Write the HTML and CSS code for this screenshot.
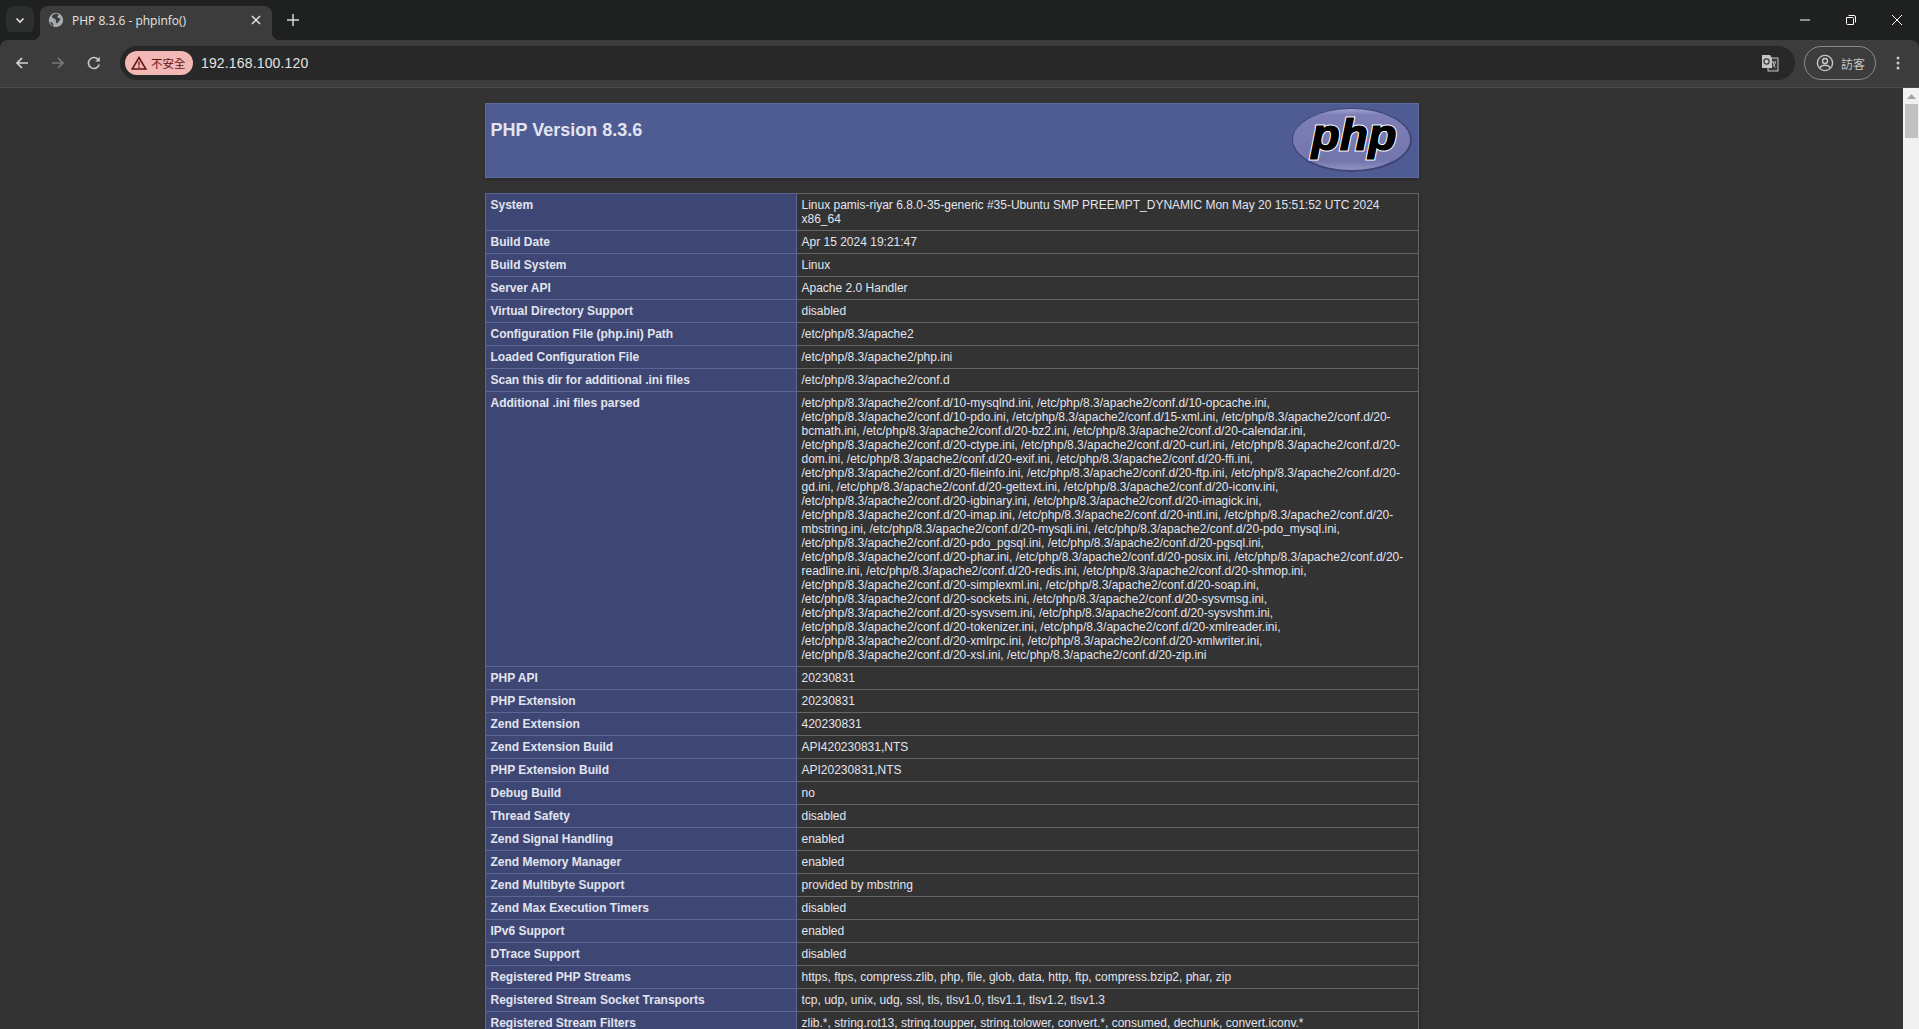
FILE: index.html
```html
<!DOCTYPE html>
<html lang="zh-Hant">
<head>
<meta charset="utf-8">
<title>PHP 8.3.6 - phpinfo()</title>
<link rel="stylesheet" href="styles.css">
</head>
<body>
<div class="browser">
  <header class="tabstrip">
    <button class="tabsearch" aria-label="tabs">
      <svg width="12" height="12" viewBox="0 0 12 12"><path d="M2.5 4.5 6 8l3.5-3.5" fill="none" stroke="#e3e3e3" stroke-width="1.6"/></svg>
    </button>
    <div class="tab">
      <svg class="favicon" width="16" height="16" viewBox="0 0 16 16"><circle cx="8" cy="8" r="7.2" fill="#a8abb0"/><path d="M8 1.5c-1 .8-3.5 1-4 2.5-.4 1.300 1.500 2.400 2.800 2.900.9.400 1.400 1.100 1 2-.3.800.2 2 1 2.300.8.300 1.500-1.500 2.200-2.300.6-.7 1.500-1 1.200-2.100-.2-.7-1.500-.6-2.200-1-.8-.5-.6-1.500 0-2.100.3-.3.800-.4 1-.7C10.500 2 9 1.400 8 1.500zM2 9.500c1 .7 2.500 1 3 2 .3.800.1 2 .5 2.600C3.800 13.500 2.500 11.500 2 9.500z" fill="#3c3c3c"/></svg>
      <span class="tab-title">PHP 8.3.6 - phpinfo()</span>
      <svg class="tab-close" width="10" height="10" viewBox="0 0 10 10"><path d="M1 1l8 8M9 1 1 9" stroke="#e3e3e3" stroke-width="1.500"/></svg>
    </div>
    <svg class="newtab" width="14" height="14" viewBox="0 0 14 14"><path d="M7 1v12M1 7h12" stroke="#d8d8d8" stroke-width="1.500"/></svg>
    <div class="winctl">
      <span class="winbtn"><svg width="12" height="12" viewBox="0 0 12 12"><path d="M1 6h10" stroke="#fff"/></svg></span>
      <span class="winbtn"><svg width="12" height="12" viewBox="0 0 12 12"><path d="M1.500 3.500h6a1 1 0 0 1 1 1v6h-6a1 1 0 0 1-1-1zM3.500 1.500h5.500a1.500 1.500 0 0 1 1.500 1.500v5.500" fill="none" stroke="#fff"/></svg></span>
      <span class="winbtn"><svg width="12" height="12" viewBox="0 0 12 12"><path d="M1 1l10 10M11 1 1 11" stroke="#fff"/></svg></span>
    </div>
  </header>
  <nav class="toolbar">
    <svg class="navicon" width="16" height="16" viewBox="0 0 16 16"><path d="M14 8H3M8 3 3 8l5 5" fill="none" stroke="#d4d4d4" stroke-width="1.700"/></svg>
    <svg class="navicon" width="16" height="16" viewBox="0 0 16 16"><path d="M2 8h11M8 3l5 5-5 5" fill="none" stroke="#797979" stroke-width="1.700"/></svg>
    <svg class="navicon" width="16" height="16" viewBox="0 0 16 16"><path d="M13.200 9.500A5.500 5.500 0 1 1 12 4.300" fill="none" stroke="#c8c8c8" stroke-width="1.600"/><path d="M13.800 1.800v4.600H9.200z" fill="#c8c8c8"/></svg>
    <div class="omnibox">
      <span class="badge">
        <svg width="16" height="14" viewBox="0 0 16 14"><path d="M8 1.500 14.800 13H1.200z" fill="none" stroke="#601410" stroke-width="1.500"/><path d="M8 5.500v4M8 10.300v1.400" stroke="#601410" stroke-width="1.300"/></svg>
        <span class="badge-text">不安全</span>
      </span>
      <span class="url">192.168.100.120</span>
      <svg class="translate" width="18" height="18" viewBox="0 0 18 18"><rect x="7" y="4" width="10" height="13" fill="#383838" stroke="#c4c4c4"/><path d="M1 1h8l2 3v10H1z" fill="#c4c4c4"/><circle cx="5.500" cy="7.500" r="2.600" fill="none" stroke="#3a3a3a" stroke-width="1.200"/><path d="M10.500 8h4.500M12 8l2 5.500M14.500 8c-.3 2-1.500 3.500-3 4.500" fill="none" stroke="#c4c4c4" stroke-width=".9"/></svg>
    </div>
    <div class="profile">
      <svg width="18" height="18" viewBox="0 0 18 18"><circle cx="9" cy="9" r="7.600" fill="none" stroke="#c8c8c8" stroke-width="1.400"/><circle cx="9" cy="7" r="2.500" fill="none" stroke="#c8c8c8" stroke-width="1.400"/><path d="M3.800 14c1-2 3-2.700 5.200-2.700s4.200.7 5.200 2.700" fill="none" stroke="#c8c8c8" stroke-width="1.400"/></svg>
      <span class="profile-text">訪客</span>
    </div>
    <svg class="kebab" width="4" height="14" viewBox="0 0 4 14"><circle cx="2" cy="2" r="1.500" fill="#c8c8c8"/><circle cx="2" cy="7" r="1.500" fill="#c8c8c8"/><circle cx="2" cy="12" r="1.500" fill="#c8c8c8"/></svg>
  </nav>
  <div class="viewport">
    <main class="page">
      <table class="head-table">
        <tr class="h">
          <td>
            <svg class="php-logo" width="120" height="64" viewBox="0 0 120 64" role="img" aria-label="PHP logo">
              <defs>
                <linearGradient id="ell" x1="0" y1="0" x2="0" y2="1"><stop offset="0" stop-color="#a0a2cc"/><stop offset=".1" stop-color="#7d7fb6"/><stop offset=".85" stop-color="#7376ad"/><stop offset="1" stop-color="#9092c2"/></linearGradient>
              </defs>
              <ellipse cx="60" cy="32" rx="60" ry="32" fill="#3f4677"/>
              <ellipse cx="59.500" cy="31.500" rx="58.500" ry="30.500" fill="url(#ell)"/>
              <text x="62" y="42" class="php-word-back" text-anchor="middle" textLength="85" lengthAdjust="spacingAndGlyphs">php</text>
              <text x="62" y="42" class="php-word" text-anchor="middle" textLength="85" lengthAdjust="spacingAndGlyphs">php</text>
            </svg>
            <h1 class="p">PHP Version 8.3.6</h1>
          </td>
        </tr>
      </table>
      <table class="info-table">
        <tr><td class="e">System</td><td class="v">Linux pamis-riyar 6.8.0-35-generic #35-Ubuntu SMP PREEMPT_DYNAMIC Mon May 20 15:51:52 UTC 2024 x86_64</td></tr>
        <tr><td class="e">Build Date</td><td class="v">Apr 15 2024 19:21:47</td></tr>
        <tr><td class="e">Build System</td><td class="v">Linux</td></tr>
        <tr><td class="e">Server API</td><td class="v">Apache 2.0 Handler</td></tr>
        <tr><td class="e">Virtual Directory Support</td><td class="v">disabled</td></tr>
        <tr><td class="e">Configuration File (php.ini) Path</td><td class="v">/etc/php/8.3/apache2</td></tr>
        <tr><td class="e">Loaded Configuration File</td><td class="v">/etc/php/8.3/apache2/php.ini</td></tr>
        <tr><td class="e">Scan this dir for additional .ini files</td><td class="v">/etc/php/8.3/apache2/conf.d</td></tr>
        <tr><td class="e">Additional .ini files parsed</td><td class="v">/etc/php/8.3/apache2/conf.d/10-mysqlnd.ini, /etc/php/8.3/apache2/conf.d/10-opcache.ini,<br>/etc/php/8.3/apache2/conf.d/10-pdo.ini, /etc/php/8.3/apache2/conf.d/15-xml.ini, /etc/php/8.3/apache2/conf.d/20-<br>bcmath.ini, /etc/php/8.3/apache2/conf.d/20-bz2.ini, /etc/php/8.3/apache2/conf.d/20-calendar.ini,<br>/etc/php/8.3/apache2/conf.d/20-ctype.ini, /etc/php/8.3/apache2/conf.d/20-curl.ini, /etc/php/8.3/apache2/conf.d/20-<br>dom.ini, /etc/php/8.3/apache2/conf.d/20-exif.ini, /etc/php/8.3/apache2/conf.d/20-ffi.ini,<br>/etc/php/8.3/apache2/conf.d/20-fileinfo.ini, /etc/php/8.3/apache2/conf.d/20-ftp.ini, /etc/php/8.3/apache2/conf.d/20-<br>gd.ini, /etc/php/8.3/apache2/conf.d/20-gettext.ini, /etc/php/8.3/apache2/conf.d/20-iconv.ini,<br>/etc/php/8.3/apache2/conf.d/20-igbinary.ini, /etc/php/8.3/apache2/conf.d/20-imagick.ini,<br>/etc/php/8.3/apache2/conf.d/20-imap.ini, /etc/php/8.3/apache2/conf.d/20-intl.ini, /etc/php/8.3/apache2/conf.d/20-<br>mbstring.ini, /etc/php/8.3/apache2/conf.d/20-mysqli.ini, /etc/php/8.3/apache2/conf.d/20-pdo_mysql.ini,<br>/etc/php/8.3/apache2/conf.d/20-pdo_pgsql.ini, /etc/php/8.3/apache2/conf.d/20-pgsql.ini,<br>/etc/php/8.3/apache2/conf.d/20-phar.ini, /etc/php/8.3/apache2/conf.d/20-posix.ini, /etc/php/8.3/apache2/conf.d/20-<br>readline.ini, /etc/php/8.3/apache2/conf.d/20-redis.ini, /etc/php/8.3/apache2/conf.d/20-shmop.ini,<br>/etc/php/8.3/apache2/conf.d/20-simplexml.ini, /etc/php/8.3/apache2/conf.d/20-soap.ini,<br>/etc/php/8.3/apache2/conf.d/20-sockets.ini, /etc/php/8.3/apache2/conf.d/20-sysvmsg.ini,<br>/etc/php/8.3/apache2/conf.d/20-sysvsem.ini, /etc/php/8.3/apache2/conf.d/20-sysvshm.ini,<br>/etc/php/8.3/apache2/conf.d/20-tokenizer.ini, /etc/php/8.3/apache2/conf.d/20-xmlreader.ini,<br>/etc/php/8.3/apache2/conf.d/20-xmlrpc.ini, /etc/php/8.3/apache2/conf.d/20-xmlwriter.ini,<br>/etc/php/8.3/apache2/conf.d/20-xsl.ini, /etc/php/8.3/apache2/conf.d/20-zip.ini</td></tr>
        <tr><td class="e">PHP API</td><td class="v">20230831</td></tr>
        <tr><td class="e">PHP Extension</td><td class="v">20230831</td></tr>
        <tr><td class="e">Zend Extension</td><td class="v">420230831</td></tr>
        <tr><td class="e">Zend Extension Build</td><td class="v">API420230831,NTS</td></tr>
        <tr><td class="e">PHP Extension Build</td><td class="v">API20230831,NTS</td></tr>
        <tr><td class="e">Debug Build</td><td class="v">no</td></tr>
        <tr><td class="e">Thread Safety</td><td class="v">disabled</td></tr>
        <tr><td class="e">Zend Signal Handling</td><td class="v">enabled</td></tr>
        <tr><td class="e">Zend Memory Manager</td><td class="v">enabled</td></tr>
        <tr><td class="e">Zend Multibyte Support</td><td class="v">provided by mbstring</td></tr>
        <tr><td class="e">Zend Max Execution Timers</td><td class="v">disabled</td></tr>
        <tr><td class="e">IPv6 Support</td><td class="v">enabled</td></tr>
        <tr><td class="e">DTrace Support</td><td class="v">disabled</td></tr>
        <tr><td class="e">Registered PHP Streams</td><td class="v">https, ftps, compress.zlib, php, file, glob, data, http, ftp, compress.bzip2, phar, zip</td></tr>
        <tr><td class="e">Registered Stream Socket Transports</td><td class="v">tcp, udp, unix, udg, ssl, tls, tlsv1.0, tlsv1.1, tlsv1.2, tlsv1.3</td></tr>
        <tr><td class="e">Registered Stream Filters</td><td class="v">zlib.*, string.rot13, string.toupper, string.tolower, convert.*, consumed, dechunk, convert.iconv.*</td></tr>
      </table>
    </main>
    <aside class="scrollbar">
      <svg class="scroll-arrow" width="9" height="5" viewBox="0 0 9 5"><path d="M4.500 0 9 5H0z" fill="#a3a3a3"/></svg>
      <div class="scroll-thumb"></div>
    </aside>
  </div>
</div>
</body>
</html>
```
FILE: styles.css
```css
* { box-sizing: border-box; }
html, body { margin: 0; height: 100%; overflow: hidden; }
body { background: #333; font-family: "Liberation Sans", Arial, sans-serif; }

.browser { display: flex; flex-direction: column; height: 100vh; }

.tabstrip {
  flex: 0 0 40px;
  display: flex;
  align-items: flex-start;
  background: #1f2020;
  padding: 6px 0 0 6px;
  overflow: hidden;
}
.tabsearch {
  width: 28px; height: 28px;
  border: 0; border-radius: 8px;
  background: #2d2e2e;
  display: flex; align-items: center; justify-content: center;
  padding: 0;
  margin-right: 6px;
}
.tab {
  position: relative;
  width: 232px; height: 34px;
  background: #3c3c3c;
  border-radius: 8px 8px 0 0;
  display: flex; align-items: center;
  padding: 0 7px 6px 8px;
  color: #e3e3e3;
  font-size: 12px;
}
.tab::before, .tab::after {
  content: "";
  position: absolute;
  bottom: 0;
  width: 8px; height: 8px;
}
.tab::before { left: -8px; background: radial-gradient(circle at 0 0, transparent 8px, #3c3c3c 8.5px); }
.tab::after { right: -8px; background: radial-gradient(circle at 100% 0, transparent 8px, #3c3c3c 8.5px); }
.favicon { flex: none; }
.tab-title { margin-left: 8px; flex: 1; white-space: nowrap; font-family: "Open Sans", "Liberation Sans", sans-serif; font-size: 12px; }
.tab-close { flex: none; margin-right: 4px; }
.newtab { margin: 7px 0 0 14px; flex: none; }
.winctl { margin-left: auto; display: flex; margin-right: -1px; margin-top: -6px; }
.winbtn { width: 46px; height: 40px; display: flex; align-items: center; justify-content: center; }

.toolbar {
  flex: 0 0 48px;
  display: flex;
  align-items: center;
  background: #3c3c3c;
  border-bottom: 1px solid #4a4a4a;
  border-radius: 8px 8px 0 0;
  padding: 0 19px 1px 14px;
  box-shadow: 0 -8px 0 #1f2020;
}
.navicon { flex: none; margin-right: 20px; }
.navicon:nth-of-type(3) { margin-right: 18px; }
.omnibox {
  flex: 1;
  height: 34px;
  margin-right: 9px;
  border-radius: 17px;
  background: #282828;
  display: flex; align-items: center;
  padding: 0 16px 0 5px;
}
.badge {
  display: flex; align-items: center;
  height: 24px; width: 68px;
  padding-left: 6px;
  border-radius: 12px;
  background: #f2b8b5;
  color: #601410;
  font-size: 11.500px;
  font-family: "Noto Sans CJK TC", sans-serif;
}
.badge-text { margin-left: 4px; white-space: nowrap; }
.url { margin-left: 8px; color: #e3e3e3; font-size: 14px; letter-spacing: .15px; flex: 1; }
.translate { flex: none; }
.profile {
  flex: none;
  width: 72px; height: 34px;
  border: 1px solid #8a8a8a;
  border-radius: 17px;
  display: flex; align-items: center;
  padding-left: 11px;
  color: #c8c8c8;
  font-size: 12px;
  font-family: "Noto Sans CJK TC", sans-serif;
}
.profile-text { margin-left: 7px; white-space: nowrap; }
.kebab { flex: none; margin-left: 20px; }

.viewport { flex: 1; min-height: 0; display: flex; overflow: hidden; background: #333; }
.page { flex: 1; min-width: 0; padding-top: 15px; display: flex; flex-direction: column; align-items: center; overflow: hidden; }

table { border-collapse: collapse; width: 934px; flex: none; font-size: 12px; line-height: 14px; color: #e2e4ef; }
td { border: 1px solid #666; padding: 4px 5px; vertical-align: baseline; }

.head-table { box-shadow: 1px 2px 3px rgba(0, 0, 0, .2); }
.h td { background: #4f5b93; border-color: #5f6a9c; height: 74px; vertical-align: top; }
.p { margin: 12px 0; font-size: 18px; line-height: 20px; font-weight: bold; text-align: left; }
.php-logo { float: right; margin: 0 1px 0 10px; }
.php-word, .php-word-back { font-family: "Liberation Sans", Arial, sans-serif; font-weight: bold; font-style: italic; font-size: 44px; }
.php-word { fill: #000; stroke: #000; stroke-width: 1.2px; }
.php-word-back { fill: #000; stroke: #fff; stroke-width: 3.2px; paint-order: stroke; }

.info-table { margin-top: 15px; table-layout: fixed; box-shadow: 1px 2px 3px rgba(0, 0, 0, .2); }
.e { width: 311px; background: #3e4774; border-color: #5b6696; font-weight: bold; }
.v { background: #333; }

.scrollbar { flex: 0 0 16px; background: #f1f1f1; display: flex; flex-direction: column; align-items: center; padding: 6px 0 0 1px; }
.scroll-arrow { flex: none; margin-bottom: 5px; }
.scroll-thumb { width: 13px; height: 34px; background: #c1c1c1; }
```
